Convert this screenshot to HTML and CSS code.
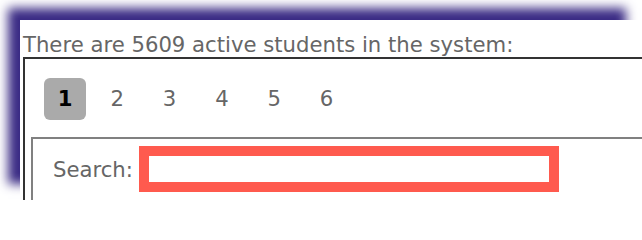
FILE: index.html
```html
<!DOCTYPE html>
<html>
<head>
<meta charset="utf-8">
<link rel="stylesheet" href="styles.css">
</head>
<body>
<div class="panel">
  <p class="intro">There are 5609 active students in the system:</p>
  <div class="outer">
    <div class="pager">
      <span class="page current">1</span>
      <span class="page">2</span>
      <span class="page">3</span>
      <span class="page">4</span>
      <span class="page">5</span>
      <span class="page">6</span>
    </div>
    <div class="inner">
      <label class="search-label" for="q">Search:</label>
      <input class="search-input" id="q" type="text">
    </div>
  </div>
</div>
</body>
</html>
```

FILE: styles.css
```css
html, body {
  margin: 0;
  padding: 0;
  background: #fff;
  overflow: hidden;
}
body {
  width: 642px;
  height: 200px;
  font-family: "DejaVu Sans", Verdana, sans-serif;
  font-size: 21.2px;
  color: #666;
}
.panel {
  margin: 20px 0 0 20px;
  width: 622px;
  height: 180px;
  padding: 13px 0 0 3px;
  box-sizing: border-box;
  background: #fff;
  box-shadow: -14px -14px 10px -2px #3b2c85;
}
.intro {
  margin: 0;
  line-height: 24px;
  white-space: nowrap;
}
.outer {
  border: 2px solid #333;
  border-right: none;
  border-bottom: none;
  padding: 19px 0 0 6px;
}
.pager {
  display: flex;
  gap: 10.3px;
  margin-left: 13px;
}
.page {
  width: 42px;
  height: 42px;
  display: flex;
  align-items: center;
  justify-content: center;
  line-height: 1;
}
.page.current {
  background: #aaa;
  border-radius: 6px;
  color: #000;
  font-weight: bold;
}
.inner {
  margin-top: 17px;
  border: 2px solid #808080;
  border-right: none;
  border-bottom: none;
  padding: 7px 0 8px 20px;
  display: flex;
  align-items: center;
  gap: 6px;
}
.search-label {
  color: #666;
}
.search-input {
  width: 420px;
  height: 46px;
  box-sizing: border-box;
  border: 10px solid #ff5a4e;
  background: #fff;
  margin: 0;
  padding: 0;
  outline: none;
}
```
